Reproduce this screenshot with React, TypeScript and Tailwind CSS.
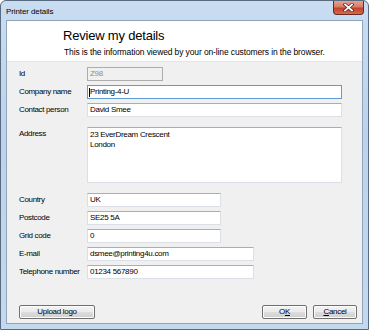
import React from "react";

const FONT = { fontFamily: '"Liberation Sans", Arial, sans-serif' };

function Field({
  label,
  value,
  width,
  focused,
  disabled,
}: {
  label: string;
  value: string;
  width: string;
  focused?: boolean;
  disabled?: boolean;
}) {
  return (
    <div className="flex h-[14px] items-center">
      <span className="w-[68px] shrink-0 text-[8px] tracking-[-0.35px] text-black">{label}</span>
      <div
        className={
          "flex h-[14px] items-center pl-[2px] text-[8px] tracking-[-0.3px] " +
          width +
          (disabled
            ? " border border-[#adadad] bg-[#f0f0f0] text-[#8d8d8d]"
            : focused
              ? " border border-[#5d9ad6] bg-white text-black"
              : " border border-[#dbe0e6] border-t-[#abadb3] bg-white text-black")
        }
      >
        {focused && <span className="-ml-[1px] h-[9px] w-px bg-black" />}
        {value}
      </div>
    </div>
  );
}

function Button({ children, width }: { children: React.ReactNode; width: string }) {
  return (
    <div
      className={
        "flex h-[14px] items-center justify-center rounded-[2px] border border-[#707070] bg-[linear-gradient(#f3f3f3_0%,#ebebeb_48%,#dddddd_52%,#cfcfcf_100%)] text-[8px] tracking-[-0.3px] text-black shadow-[inset_0_0_0_1px_#fcfcfc] " +
        width
      }
    >
      {children}
    </div>
  );
}

export default function App() {
  return (
    <div
      style={FONT}
      className="flex h-[330px] w-[369px] flex-col rounded-t-[6px] border border-[#5a6b80] bg-[linear-gradient(180deg,#c9ddf2_0%,#bcd3eb_40%,#c4d9ee_100%)] px-[5px] pb-[5px]"
    >
      {/* title bar */}
      <div className="flex h-[19px] items-start">
        <span className="mt-[5px] text-[8px] tracking-[-0.1px] text-black">Printer details</span>
        <div className="ml-auto mr-[-1px] flex h-[14px] w-[31px] items-center justify-center rounded-b-[4px] border border-t-0 border-[#6b2a22] bg-[linear-gradient(#e4a393_0%,#d97b67_45%,#c5402a_55%,#d06b4f_100%)]">
          <svg width="11" height="9" viewBox="0 0 11 9">
            <path d="M2 1.5 L9 7.5 M9 1.5 L2 7.5" stroke="#4a2a25" strokeWidth="3.2" strokeLinecap="square" />
            <path d="M2 1.5 L9 7.5 M9 1.5 L2 7.5" stroke="#ffffff" strokeWidth="1.7" strokeLinecap="square" />
          </svg>
        </div>
      </div>

      {/* client area */}
      <div className="flex flex-1 flex-col border border-[#8fa5bd] bg-[#f0f0f0]">
        <div className="h-[41px] border-b border-[#e4e4e4] bg-white pl-[56px] pt-[7px]">
          <div className="text-[13px] leading-[15px] tracking-[-0.2px] text-black">Review my details</div>
          <div className="mt-[4px] pl-[1px] text-[8.5px] leading-[10px] tracking-[-0.12px] text-black">
            This is the information viewed by your on-line customers in the browser.
          </div>
        </div>

        <div className="flex flex-col pl-[12px] pt-[5px]">
          <div className="flex flex-col gap-[4px]">
            <Field label="Id" value="Z98" width="w-[76px]" disabled />
            <Field label="Company name" value="Printing-4-U" width="w-[255px]" focused />
            <Field label="Contact person" value="David Smee" width="w-[255px]" />
          </div>

          <div className="mt-[10px] flex">
            <span className="w-[68px] shrink-0 pt-[1px] text-[8px] tracking-[-0.35px] text-black">Address</span>
            <div className="h-[56px] w-[255px] border border-[#dbe0e6] border-t-[#abadb3] bg-white pl-[2px] pt-[2px] text-[8px] leading-[10px] tracking-[-0.3px] text-black">
              <div>23 EverDream Crescent</div>
              <div>London</div>
            </div>
          </div>

          <div className="mt-[10px] flex flex-col gap-[4px]">
            <Field label="Country" value="UK" width="w-[134px]" />
            <Field label="Postcode" value="SE25 5A" width="w-[134px]" />
            <Field label="Grid code" value="0" width="w-[134px]" />
            <Field label="E-mail" value="dsmee@printing4u.com" width="w-[167px]" />
            <Field label="Telephone number" value="01234 567890" width="w-[167px]" />
          </div>
        </div>

        <div className="mb-[4px] mt-auto flex pl-[12px] pr-[5px]">
          <Button width="w-[76px]">Upload logo</Button>
          <div className="ml-auto flex gap-[6px]">
            <Button width="w-[45px]">
              O<span className="underline">K</span>
            </Button>
            <Button width="w-[44px]">
              <span className="underline">C</span>ancel
            </Button>
          </div>
        </div>
      </div>
    </div>
  );
}
